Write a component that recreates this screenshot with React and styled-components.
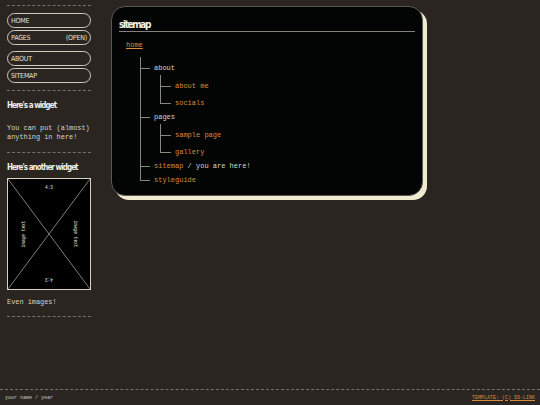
import { createGlobalStyle, styled } from "styled-components";

const GlobalStyle = createGlobalStyle`
  html, body {
    margin: 0;
    padding: 0;
    background: #2a2520;
  }
  body {
    font-family: "Liberation Mono", "DejaVu Sans Mono", monospace;
    color: #d8d5cb;
  }
`;

const Page = styled.div`
  min-height: 100vh;
  display: flex;
  flex-direction: column;
`;

const Layout = styled.div`
  flex: 1;
  display: flex;
  align-items: flex-start;
  gap: 20px;
  padding: 5px 7px 0;
`;

const Sidebar = styled.aside`
  width: 84px;
  display: flex;
  flex-direction: column;
`;

const Rule = styled.hr`
  margin: ${(p) => p.$m || "0"};
  border: 0;
  border-top: 1px dashed #77716a;
  height: 0;
`;

const NavGroup = styled.nav`
  display: flex;
  flex-direction: column;
  gap: 2px;
  margin-top: ${(p) => p.$top || "0"};
`;

const NavItem = styled.a`
  height: 13px;
  border: 1px solid #cfcabd;
  border-radius: 8px;
  padding: 0 3px;
  display: flex;
  align-items: center;
  justify-content: space-between;
  font-family: "Liberation Sans Narrow", "DejaVu Sans Condensed", sans-serif;
  font-size: 7px;
  letter-spacing: -0.2px;
  text-transform: uppercase;
  color: #e6e2d6;
  text-decoration: none;
`;

const WidgetTitle = styled.h3`
  margin: ${(p) => p.$m || "0"};
  font-family: "Liberation Sans Narrow", "DejaVu Sans Condensed", sans-serif;
  font-weight: bold;
  font-size: 8px;
  line-height: 12px;
  letter-spacing: -0.95px;
  white-space: nowrap;
  color: #f2efe6;
`;

const WidgetText = styled.p`
  margin: ${(p) => p.$m || "0"};
  font-size: 6.9px;
  line-height: 9px;
  color: #d8d5cb;
`;

const Placeholder = styled.svg`
  display: block;
  width: 84px;
  height: 112px;
  margin-top: 4px;
`;

const Main = styled.main`
  width: 296px;
  margin-top: 1px;
  padding: 12px 7px 8px;
  background: #030404;
  border: 1px solid #5c5954;
  border-radius: 14px;
  box-shadow: 4px 4px 0 #f1ead3;
`;

const Title = styled.h1`
  margin: 0;
  border-bottom: 1px solid #85817a;
  font-family: "Liberation Sans Narrow", "DejaVu Sans Condensed", sans-serif;
  font-weight: bold;
  font-size: 10px;
  line-height: 12px;
  letter-spacing: -1.4px;
  color: #f4f1e8;
`;

const Root = styled.div`
  margin-top: 6px;
  padding-left: 7px;
  font-size: 7px;
  line-height: 14px;
`;

const Link = styled.a`
  color: #d98b3d;
  text-decoration: ${(p) => (p.$underline ? "underline" : "none")};
`;

const Plain = styled.span`
  color: #d8d5cb;
`;

const Tree = styled.ul`
  list-style: none;
  margin: ${(p) => (p.$level === 1 ? "9px 0 0" : "0")};
  padding-left: ${(p) => (p.$level === 1 ? "28px" : "21px")};

  & > li {
    position: relative;
    padding-top: ${(p) => (p.$level === 1 ? "0" : "3.5px")};
  }

  & > li::before {
    content: "";
    position: absolute;
    left: ${(p) => (p.$level === 1 ? "-14px" : "-15px")};
    top: 0;
    width: ${(p) => (p.$level === 1 ? "9px" : "10px")};
    height: ${(p) => (p.$level === 1 ? "7px" : "10.5px")};
    border-left: 1px solid #8a8780;
    border-bottom: 1px solid #8a8780;
  }

  & > li:first-child::before {
    top: ${(p) => (p.$level === 1 ? "-4px" : "0")};
    height: ${(p) => (p.$level === 1 ? "11px" : "10.5px")};
  }

  & > li:not(:last-child)::after {
    content: "";
    position: absolute;
    left: ${(p) => (p.$level === 1 ? "-14px" : "-15px")};
    top: 0;
    bottom: 0;
    border-left: 1px solid #8a8780;
  }
`;

const Footer = styled.footer`
  height: 15px;
  border-top: 1px dashed #77716a;
  padding: 0 5px;
  display: flex;
  align-items: center;
  justify-content: space-between;
  font-size: 5px;
  color: #cfcabd;
`;

const FooterLink = styled.a`
  color: #d98b3d;
  text-decoration: underline;
  text-transform: uppercase;
`;

function ImageBox() {
  const c = "#d8d1bc";
  return (
    <Placeholder viewBox="0 0 84 112">
      <rect x="0.5" y="0.5" width="83" height="111" fill="#000" stroke={c} />
      <line x1="1" y1="1" x2="83" y2="111" stroke={c} strokeWidth="0.6" />
      <line x1="83" y1="1" x2="1" y2="111" stroke={c} strokeWidth="0.6" />
      <g fill="#e8e3d4" fontSize="4.5" fontFamily="Liberation Mono, monospace" textAnchor="middle">
        <text x="42" y="11">4:3</text>
        <text x="42" y="103" transform="rotate(180 42 101.5)">4:3</text>
        <text x="0" y="0" transform="translate(17.5 56) rotate(-90)">image text</text>
        <text x="0" y="0" transform="translate(66.5 56) rotate(90)">image text</text>
      </g>
    </Placeholder>
  );
}

export default function App() {
  return (
    <Page>
      <GlobalStyle />
      <Layout>
        <Sidebar>
          <Rule />
          <NavGroup $top="7px">
            <NavItem href="#">home</NavItem>
            <NavItem href="#">
              <span>pages</span>
              <span>(open)</span>
            </NavItem>
          </NavGroup>
          <NavGroup $top="6px">
            <NavItem href="#">about</NavItem>
            <NavItem href="#">sitemap</NavItem>
          </NavGroup>
          <Rule $m="7px 0 0" />
          <WidgetTitle $m="9px 0 0">Here's a widget</WidgetTitle>
          <WidgetText $m="12px 0 0">
            You can put (almost) anything in here!
          </WidgetText>
          <Rule $m="10px 0 0" />
          <WidgetTitle $m="9px 0 0">Here's another widget</WidgetTitle>
          <ImageBox />
          <WidgetText $m="8px 0 0">Even images!</WidgetText>
          <Rule $m="9px 0 0" />
        </Sidebar>

        <Main>
          <Title>sitemap</Title>
          <Root>
            <Link href="#" $underline>home</Link>
            <Tree $level={1}>
              <li>
                <Plain>about</Plain>
                <Tree $level={2}>
                  <li><Link href="#">about me</Link></li>
                  <li><Link href="#">socials</Link></li>
                </Tree>
              </li>
              <li>
                <Plain>pages</Plain>
                <Tree $level={2}>
                  <li><Link href="#">sample page</Link></li>
                  <li><Link href="#">gallery</Link></li>
                </Tree>
              </li>
              <li>
                <Link href="#">sitemap</Link> <Plain>/ you are here!</Plain>
              </li>
              <li><Link href="#">styleguide</Link></li>
            </Tree>
          </Root>
        </Main>
      </Layout>
      <Footer>
        <span>your name / year</span>
        <FooterLink href="#">template: (c) ss-link</FooterLink>
      </Footer>
    </Page>
  );
}
